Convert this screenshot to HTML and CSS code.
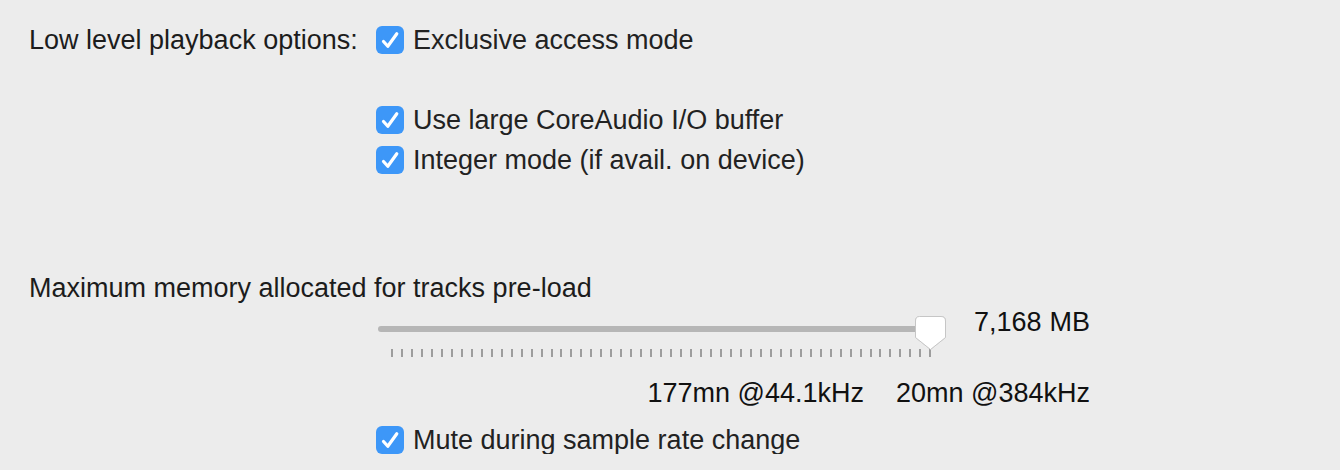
FILE: index.html
```html
<!DOCTYPE html>
<html>
<head>
<meta charset="utf-8">
<link rel="stylesheet" href="styles.css">
</head>
<body>
<div class="page">
  <div class="group">
    <div class="group-label">Low level playback options:</div>
    <div class="options">
      <div class="check-row">
        <span class="box"><svg viewBox="0 0 28 28" width="28" height="28"><path d="M7.5 15.5 L11.8 20.3 L20.8 7.8" fill="none" stroke="#fff" stroke-width="3.2" stroke-linecap="round" stroke-linejoin="round"/></svg></span>
        <span class="check-text">Exclusive access mode</span>
      </div>
      <div class="check-row first-sub">
        <span class="box"><svg viewBox="0 0 28 28" width="28" height="28"><path d="M7.5 15.5 L11.8 20.3 L20.8 7.8" fill="none" stroke="#fff" stroke-width="3.2" stroke-linecap="round" stroke-linejoin="round"/></svg></span>
        <span class="check-text">Use large CoreAudio I/O buffer</span>
      </div>
      <div class="check-row next-sub">
        <span class="box"><svg viewBox="0 0 28 28" width="28" height="28"><path d="M7.5 15.5 L11.8 20.3 L20.8 7.8" fill="none" stroke="#fff" stroke-width="3.2" stroke-linecap="round" stroke-linejoin="round"/></svg></span>
        <span class="check-text">Integer mode (if avail. on device)</span>
      </div>
    </div>
  </div>

  <div class="heading">Maximum memory allocated for tracks pre-load</div>

  <div class="slider-row">
    <div class="slider">
      <div class="track"></div>
      <div class="ticks" id="ticks"></div>
      <svg class="thumb" viewBox="0 0 33 35" width="33" height="35"><path d="M5.5 0.5 H27 Q31.5 0.5 31.5 5 V21.5 L16.5 33.5 L1.5 21.5 V5 Q1.5 0.5 5.5 0.5 Z" fill="#fff" stroke="#c6c6c6" stroke-width="1"/></svg>
    </div>
    <div class="value"><span>7,168</span><span>MB</span></div>
  </div>

  <div class="times">
    <span>177mn @44.1kHz</span>
    <span>20mn @384kHz</span>
  </div>

  <div class="check-row last-row">
    <span class="box"><svg viewBox="0 0 28 28" width="28" height="28"><path d="M7.5 15.5 L11.8 20.3 L20.8 7.8" fill="none" stroke="#fff" stroke-width="3.2" stroke-linecap="round" stroke-linejoin="round"/></svg></span>
    <span class="check-text">Mute during sample rate change</span>
  </div>
</div>
<script>
  var t = document.getElementById('ticks');
  for (var i = 0; i < 55; i++) { var d = document.createElement('span'); d.className = 'tick'; t.appendChild(d); }
</script>
</body>
</html>
```

FILE: styles.css
```css
html, body {
  margin: 0;
  padding: 0;
  background: #ececec;
}
body {
  font-family: "Liberation Sans", Arial, sans-serif;
  font-size: 27px;
  line-height: 28px;
  color: #1c1c1c;
}
.page {
  padding: 26px 0 0 29px;
}
.group {
  display: flex;
}
.group-label {
  width: 347px;
  flex: none;
}
.options {
  display: flex;
  flex-direction: column;
}
.check-row {
  display: flex;
  align-items: center;
  height: 28px;
}
.first-sub {
  margin-top: 52px;
}
.next-sub {
  margin-top: 12px;
}
.box {
  width: 28px;
  height: 28px;
  border-radius: 6px;
  background: #3d97f8;
  flex: none;
  display: block;
}
.box svg {
  display: block;
}
.check-text {
  margin-left: 9px;
  color: #222;
}
.heading {
  margin-top: 100px;
}
.slider-row {
  display: flex;
  align-items: flex-start;
  margin-top: 6px;
  padding-left: 349px;
}
.slider {
  position: relative;
  width: 568px;
  height: 50px;
  flex: none;
}
.track {
  margin-top: 18px;
  width: 552px;
  height: 6px;
  border-radius: 3px;
  background: #b6b6b6;
}
.ticks {
  display: flex;
  justify-content: space-between;
  margin-top: 17px;
  margin-left: 13px;
  width: 541px;
}
.tick {
  width: 2px;
  height: 8px;
  background: #9d9d9d;
}
.thumb {
  position: absolute;
  left: 536px;
  top: 8px;
  filter: drop-shadow(0 0.5px 0.5px rgba(0,0,0,0.12));
}
.value {
  display: flex;
  justify-content: space-between;
  width: 116px;
  margin-left: 28px;
  color: #111;
}
.times {
  display: flex;
  justify-content: flex-end;
  gap: 32px;
  width: 1061px;
  margin-top: 21px;
  color: #111;
}
.last-row {
  margin-top: 19px;
  padding-left: 347px;
}
```
